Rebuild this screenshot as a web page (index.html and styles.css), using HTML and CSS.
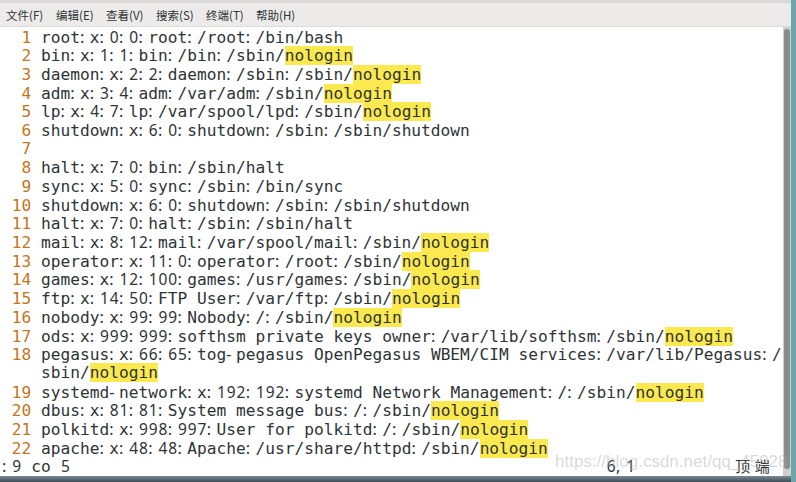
FILE: index.html
```html
<!DOCTYPE html>
<html lang="zh-CN">
<head>
    <meta charset="UTF-8">
    <title>vim /etc/passwd</title>
    <link rel="stylesheet" href="styles.css">
</head>
<body>
    <div class="window">
        <div class="topline"></div>
        <nav class="menubar">
            <span>文件(F)</span>
            <span>编辑(E)</span>
            <span>查看(V)</span>
            <span>搜索(S)</span>
            <span>终端(T)</span>
            <span>帮助(H)</span>
        </nav>
        <div class="term">
            <div class="screen" id="screen"></div>
            <div class="scrollbar"><div class="thumb"></div></div>
            <div class="watermark">https://blog.csdn.net/qq_45928598</div>
        </div>
        <div class="bottomline"></div>
    </div>

    <script>
        // contents of /etc/passwd as shown in the buffer
        const lines = [
            'root:x:0:0:root:/root:/bin/bash',
            'bin:x:1:1:bin:/bin:/sbin/nologin',
            'daemon:x:2:2:daemon:/sbin:/sbin/nologin',
            'adm:x:3:4:adm:/var/adm:/sbin/nologin',
            'lp:x:4:7:lp:/var/spool/lpd:/sbin/nologin',
            'shutdown:x:6:0:shutdown:/sbin:/sbin/shutdown',
            '',
            'halt:x:7:0:bin:/sbin/halt',
            'sync:x:5:0:sync:/sbin:/bin/sync',
            'shutdown:x:6:0:shutdown:/sbin:/sbin/shutdown',
            'halt:x:7:0:halt:/sbin:/sbin/halt',
            'mail:x:8:12:mail:/var/spool/mail:/sbin/nologin',
            'operator:x:11:0:operator:/root:/sbin/nologin',
            'games:x:12:100:games:/usr/games:/sbin/nologin',
            'ftp:x:14:50:FTP User:/var/ftp:/sbin/nologin',
            'nobody:x:99:99:Nobody:/:/sbin/nologin',
            'ods:x:999:999:softhsm private keys owner:/var/lib/softhsm:/sbin/nologin',
            ['pegasus:x:66:65:tog-pegasus OpenPegasus WBEM/CIM services:/var/lib/Pegasus:/', 'sbin/nologin'],
            'systemd-network:x:192:192:systemd Network Management:/:/sbin/nologin',
            'dbus:x:81:81:System message bus:/:/sbin/nologin',
            'polkitd:x:998:997:User for polkitd:/:/sbin/nologin',
            'apache:x:48:48:Apache:/usr/share/httpd:/sbin/nologin'
        ];

        const screen = document.getElementById('screen');

        // colons, commas and hyphens sit on the left of their cell, digits use another face
        function format(text) {
            let html = '';
            for (const ch of text) {
                if (ch === ':' || ch === '-' || ch === ',') html += '<span class="p">' + ch + '</span>';
                else if (ch >= '0' && ch <= '9') html += '<span class="d">' + ch + '</span>';
                else if (ch > '\u2e80') html += '<span class="w">' + ch + '</span>';
                else html += ch;
            }
            return html;
        }

        function row(num, text) {
            let body = format(text);
            if (text.endsWith('nologin')) {
                body = format(text.slice(0, -7)) + '<mark>nologin</mark>';
            }
            return '<div class="row"><span class="ln">' + num.padStart(3) + ' </span>' + body + '</div>';
        }

        let html = '';
        lines.forEach(function(line, i) {
            const parts = Array.isArray(line) ? line : [line];
            parts.forEach(function(part, j) {
                html += row(j === 0 ? String(i + 1) : '', part);
            });
        });

        // status line: command, ruler, position
        html += '<div class="row">' + format(':9 co 5'.padEnd(62) + '6,1'.padEnd(13)) + format('顶端') + '</div>';
        screen.innerHTML = html;
    </script>
</body>
</html>
```

FILE: styles.css
```css
body {
    margin: 0;
    background: #fff;
}

.window {
    width: 796px;
    height: 482px;
    box-sizing: border-box;
    border-right: 5px solid #6da5aa;
    display: flex;
    flex-direction: column;
    overflow: hidden;
}

.topline {
    height: 3px;
    background: #d9d9d8;
}

.menubar {
    height: 23px;
    background: #ecebea;
    border-bottom: 1px solid #dcdcdb;
    display: flex;
    align-items: center;
    padding-left: 6px;
    font-family: "Noto Sans CJK SC", sans-serif;
    font-size: 11.5px;
    color: #2e3436;
}

.menubar span {
    width: 50px;
}

.term {
    flex: 1;
    display: flex;
    position: relative;
}

.screen {
    flex: 1;
    padding: 0.5px 0 0 2px;
    font-family: "DejaVu Sans Mono", monospace;
    font-size: 16.2px;
    line-height: 18.7px;
    color: #2e3436;
    white-space: pre;
}

.row {
    height: 18.7px;
}

.ln {
    color: #c4761c;
}

/* one terminal cell = advance of DejaVu Sans Mono at 16.2px */
.p,
.d {
    display: inline-block;
    width: 9.753px;
    font-family: "Noto Sans", sans-serif;
}

.p {
    text-align: left;
}

.d {
    font-size: 15.5px;
    text-align: center;
}

.w {
    display: inline-block;
    width: 19.5px;
    font-family: "Noto Sans CJK SC", sans-serif;
    font-size: 15px;
    text-align: center;
}

mark {
    background: #fce94f;
    color: #2e3436;
}

.scrollbar {
    width: 8px;
    background: #cfcfcf;
    padding: 2px 1px;
    box-sizing: border-box;
}

.thumb {
    height: 440px;
    background: #8a8a8a;
    border-radius: 3px;
}

.watermark {
    position: absolute;
    left: 555px;
    bottom: 4px;
    font-family: "Liberation Sans", sans-serif;
    font-size: 17px;
    color: rgba(170, 170, 170, 0.45);
    pointer-events: none;
}

.bottomline {
    height: 6px;
    background: linear-gradient(#7d8a94, #3e4c58);
}
```
